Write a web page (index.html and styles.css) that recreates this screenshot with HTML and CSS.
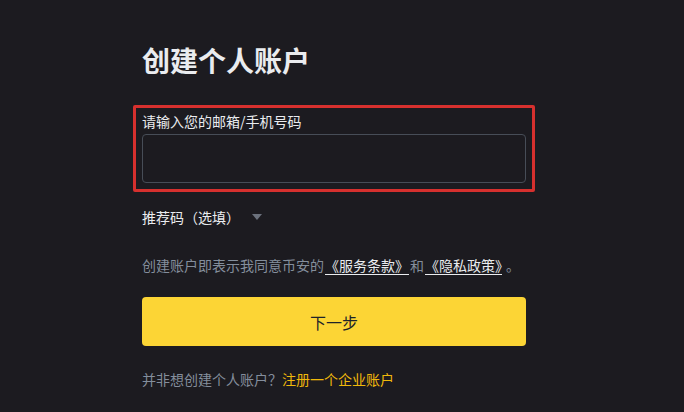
FILE: index.html
```html
<!DOCTYPE html>
<html lang="zh-CN">
<head>
<meta charset="utf-8">
<title>创建个人账户</title>
<link rel="stylesheet" href="styles.css">
</head>
<body>
<main class="form">
  <h1 class="title">创建个人账户</h1>
  <div class="field-highlight">
    <label class="label" for="account">请输入您的邮箱/手机号码</label>
    <input class="input" id="account" type="text">
  </div>
  <div class="referral">
    <span>推荐码（选填）</span>
    <span class="caret"></span>
  </div>
  <p class="terms">创建账户即表示我同意币安的<a class="terms-link" href="#">《服务条款》</a>和<a class="terms-link" href="#">《隐私政策》</a><span class="period">。</span></p>
  <button class="next" type="button">下一步</button>
  <p class="alt">并非想创建个人账户？<a class="alt-link" href="#">注册一个企业账户</a></p>
</main>
</body>
</html>
```

FILE: styles.css
```css
html, body {
  margin: 0;
  padding: 0;
  background: #1c1b20;
  height: 100%;
}
body {
  font-family: "Noto Sans CJK SC", "Noto Sans", sans-serif;
  color: #eaecef;
}
.form {
  display: flex;
  flex-direction: column;
  width: 384px;
  padding: 40px 0 0 142px;
}
.title {
  margin: 0;
  font-size: 28px;
  line-height: 40px;
  font-weight: 700;
  color: #eaecef;
}
.field-highlight {
  display: flex;
  flex-direction: column;
  margin: 25px -9px 0;
  padding: 4px 6px 6px;
  border: 3px solid #d6302e;
  border-radius: 2px;
}
.label {
  font-size: 14px;
  line-height: 18px;
  color: #eaecef;
  margin-bottom: 4px;
}
.input {
  box-sizing: border-box;
  height: 49px;
  background: transparent;
  border: 1px solid #474d57;
  border-radius: 4px;
  outline: none;
  color: #eaecef;
}
.referral {
  display: flex;
  align-items: center;
  gap: 12px;
  margin-top: 15px;
  font-size: 14px;
  line-height: 20px;
  color: #eaecef;
}
.caret {
  width: 0;
  height: 0;
  border-left: 5px solid transparent;
  border-right: 5px solid transparent;
  border-top: 6px solid #6b717c;
}
.terms {
  margin: 28px 0 0;
  font-size: 14px;
  line-height: 20px;
  color: #848e9c;
}
.terms-link {
  color: #eaecef;
  text-decoration: underline;
  text-underline-offset: 3px;
  padding: 0 1px;
}
.period {
  margin-left: 3px;
}
.next {
  margin-top: 22px;
  height: 49px;
  border: none;
  border-radius: 4px;
  background: #fcd535;
  color: #1e2329;
  font-family: inherit;
  font-size: 16px;
}
.alt {
  margin: 23px 0 0;
  font-size: 14px;
  line-height: 20px;
  color: #848e9c;
}
.alt-link {
  color: #f0b90b;
  text-decoration: none;
}
```
